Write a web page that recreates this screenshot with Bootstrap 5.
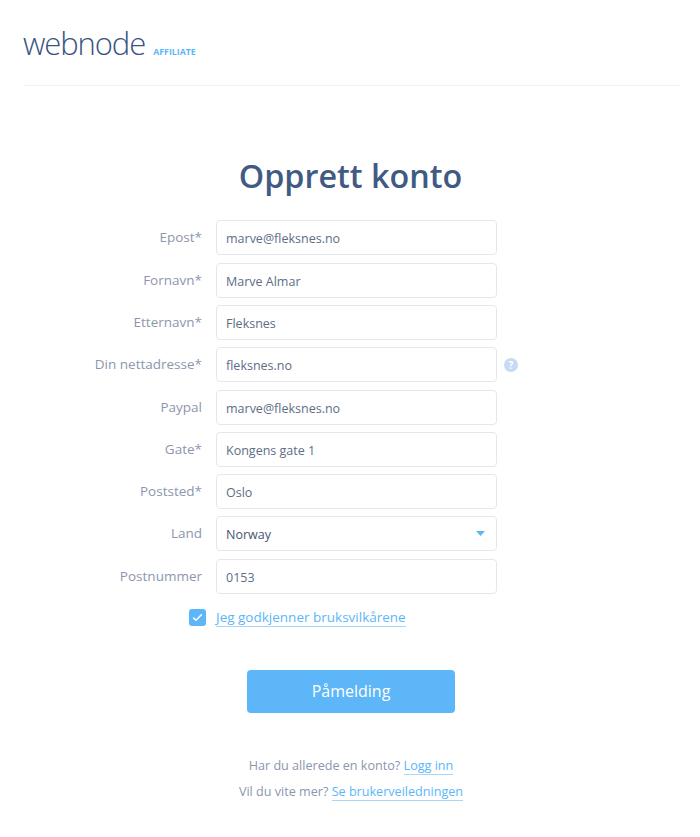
<!DOCTYPE html>
<html lang="en">
<head>
    <meta charset="UTF-8">
    <meta name="viewport" content="width=device-width, initial-scale=1.0">
    <title>Opprett konto</title>
    <link href="https://cdn.jsdelivr.net/npm/bootstrap@5.3.0/dist/css/bootstrap.min.css" rel="stylesheet">
    <script src="https://cdn.jsdelivr.net/npm/bootstrap@5.3.0/dist/js/bootstrap.bundle.min.js"></script>

    <style>
        body {
            font-family: "Open Sans", sans-serif;
            font-size: 13px;
            color: #8c96ad;
            background: #fff;
        }
        .sidehode {
            margin: 0 20px 0 23px;
            height: 86px;
            padding-top: 27px;
            border-bottom: 1px solid #f1f2f4;
        }
        .logo-tekst {
            font-family: "Open Sans", sans-serif;
            font-weight: 300;
            font-size: 31px;
            line-height: 36px;
            letter-spacing: -1.1px;
            color: #38547e;
        }
        .logo-merke {
            font-size: 8.8px;
            font-weight: 700;
            line-height: 10px;
            color: #5cb6f8;
            margin-left: 8px;
            margin-bottom: 4px;
        }
        .tittel {
            font-family: "Open Sans", sans-serif;
            font-size: 32.3px;
            font-weight: 600;
            line-height: 44px;
            color: #3f5a83;
            margin: 67px 0 23.2px 1px;
            text-align: center;
        }
        .skjema {
            display: flex;
            flex-direction: column;
            gap: 7.33px;
        }
        .etikett {
            width: 202px;
            flex: none;
            text-align: right;
            margin: 0 14px 0 0;
            font-size: 13.5px;
            line-height: 35px;
            padding-bottom: 3px;
            height: 35px;
        }
        .felt.form-control, .felt.form-select {
            width: 281px;
            height: 35px;
            padding: 2px 9px 0;
            font-size: 12.5px;
            line-height: 20px;
            color: #5d6d86;
            border: 1px solid #e6e7ea;
            border-radius: 4px;
        }
        .felt.form-select {
            color: #47566f;
            background-image: url("data:image/svg+xml,%3Csvg xmlns='http://www.w3.org/2000/svg' width='9' height='5'%3E%3Cpath d='M0 0h9L4.5 5z' fill='%235cb6f8'/%3E%3C/svg%3E");
            background-size: 9px 5px;
            background-position: right 11px center;
        }
        .hjelp {
            width: 14px;
            height: 14px;
            margin-left: 7px;
            border-radius: 50%;
            background: #c6daf3;
            color: #fff;
            font-size: 10px;
            font-weight: 700;
            line-height: 14px;
            text-align: center;
        }
        .vilkar {
            margin: 12.8px 0 0 189px;
            gap: 10px;
            height: 22px;
        }
        .avkryss {
            width: 17px;
            height: 17px;
            border-radius: 3px;
            background: #5cb6f8;
        }
        .lenke {
            color: #5cb6f8;
            text-decoration: none;
            border-bottom: 1px solid #a6d7fb;
        }
        .vilkar .lenke {
            font-size: 13.5px;
            line-height: 18px;
        }
        .knapp.btn {
            display: block;
            width: 208px;
            height: 43px;
            margin: 41px 0 0 247px;
            padding: 0;
            font-size: 16px;
            color: #fff;
            background: #5cb6f8;
            border: 0;
            border-radius: 4px;
        }
        .bunn {
            margin: 40px 0 0 2px;
            text-align: center;
            font-size: 12.6px;
            line-height: 26px;
        }
    </style>
</head>
<body>

<header class="sidehode d-flex align-items-end pb-4">
    <span class="logo-tekst">webnode</span>
    <span class="logo-merke">AFFILIATE</span>
</header>

<h1 class="tittel">Opprett konto</h1>

<form class="skjema">
    <div class="d-flex align-items-center"><label class="etikett">Epost*</label><input class="form-control felt" value="marve@fleksnes.no"></div>
    <div class="d-flex align-items-center"><label class="etikett">Fornavn*</label><input class="form-control felt" value="Marve Almar"></div>
    <div class="d-flex align-items-center"><label class="etikett">Etternavn*</label><input class="form-control felt" value="Fleksnes"></div>
    <div class="d-flex align-items-center"><label class="etikett">Din nettadresse*</label><input class="form-control felt" value="fleksnes.no"><span class="hjelp">?</span></div>
    <div class="d-flex align-items-center"><label class="etikett">Paypal</label><input class="form-control felt" value="marve@fleksnes.no"></div>
    <div class="d-flex align-items-center"><label class="etikett">Gate*</label><input class="form-control felt" value="Kongens gate 1"></div>
    <div class="d-flex align-items-center"><label class="etikett">Poststed*</label><input class="form-control felt" value="Oslo"></div>
    <div class="d-flex align-items-center"><label class="etikett">Land</label><select class="form-select felt"><option>Norway</option></select></div>
    <div class="d-flex align-items-center"><label class="etikett">Postnummer</label><input class="form-control felt" value="0153"></div>
</form>

<div class="vilkar d-flex align-items-center">
    <span class="avkryss d-flex align-items-center justify-content-center">
        <svg width="11" height="9" viewBox="0 0 11 9"><path d="M1.2 4.6 4 7.3 9.8 1.4" fill="none" stroke="#fff" stroke-width="1.5"/></svg>
    </span>
    <a class="lenke" href="#">Jeg godkjenner bruksvilkårene</a>
</div>

<button class="btn knapp" type="button">Påmelding</button>

<div class="bunn">
    <div>Har du allerede en konto? <a class="lenke" href="#">Logg inn</a></div>
    <div>Vil du vite mer? <a class="lenke" href="#">Se brukerveiledningen</a></div>
</div>

</body>
</html>
